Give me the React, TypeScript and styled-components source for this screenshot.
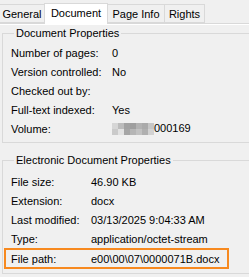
import React from 'react';
import styled, { createGlobalStyle } from 'styled-components';

const GlobalStyle = createGlobalStyle`
  html, body {
    margin: 0;
    padding: 0;
    background: #f0f0f0;
    overflow: hidden;
  }
  body {
    font-family: "Liberation Sans", Arial, sans-serif;
    font-size: 11px;
    color: #000;
  }
`;

const Window = styled.div`
  width: 249px;
  height: 277px;
  overflow: hidden;
  background: #f0f0f0;
`;

// ---------------------------------------------
// tabs
// ---------------------------------------------
const TabStrip = styled.div`
  display: flex;
  align-items: flex-end;
  height: 23px;
  border-bottom: 1px solid #d9d9d9;
  width: 300px;
`;

const Tab = styled.div<{ $width: number; $active?: boolean }>`
  box-sizing: border-box;
  width: ${({ $width }) => $width}px;
  height: ${({ $active }) => ($active ? 21 : 19)}px;
  margin-bottom: ${({ $active }) => ($active ? -1 : 0)}px;
  margin-right: -1px;
  display: flex;
  align-items: center;
  justify-content: center;
  padding-bottom: ${({ $active }) => ($active ? 2 : 0)}px;
  border: 1px solid #d9d9d9;
  border-bottom: ${({ $active }) => ($active ? 'none' : '1px solid #d9d9d9')};
  background: ${({ $active }) => ($active ? '#ffffff' : '#f0f0f0')};
  position: relative;
  z-index: ${({ $active }) => ($active ? 1 : 0)};

  &:first-child {
    border-left: none;
  }
`;

const Page = styled.div`
  border-top: 1px solid #ffffff;
  padding: 2px 0 0 2px;
`;

// ---------------------------------------------
// groups
// ---------------------------------------------
const Group = styled.fieldset<{ $top: number; $pad: number }>`
  box-sizing: border-box;
  width: 270px;
  margin: ${({ $top }) => $top}px 0 0 0;
  padding: ${({ $pad }) => $pad}px 0 4px 8px;
  border: 1px solid #d9d9d9;
  border-right: none;

  legend {
    padding: 0 2px;
    margin-left: 3px;
    line-height: 13px;
  }
`;

const Row = styled.div<{ $labelWidth: number; $highlight?: boolean }>`
  display: grid;
  grid-template-columns: ${({ $labelWidth }) => $labelWidth}px auto;
  align-items: center;
  height: 19px;
  white-space: nowrap;

  ${({ $highlight }) =>
    $highlight &&
    `
    box-sizing: border-box;
    width: 225px;
    height: 21px;
    margin: 0 0 0 -7px;
    padding-left: 5px;
    grid-template-columns: 80px auto;
    border: 2px solid #f7891f;
  `}
`;

const Mosaic = styled.span`
  display: inline-grid;
  grid-template-columns: repeat(7, 6px);
  grid-auto-rows: 6px;
  vertical-align: middle;
  margin-top: -1px;
`;

const Pixel = styled.span<{ $c: string }>`
  background: ${({ $c }) => $c};
`;

const mosaicColors = [
  '#d6d6d6', '#bcbcbc', '#a2a2a2', '#9e9e9e', '#b2b2b2', '#aaaaaa', '#c6c6c6',
  '#cacaca', '#e2e2e2', '#a6a6a6', '#b6b6b6', '#c2c2c2', '#b0b0b0', '#d2d2d2',
];

const docProps: [string, React.ReactNode][] = [
  ['Number of pages:', '0'],
  ['Version controlled:', 'No'],
  ['Checked out by:', ''],
  ['Full-text indexed:', 'Yes'],
  [
    'Volume:',
    <span>
      <Mosaic>
        {mosaicColors.map((c, i) => (
          <Pixel key={i} $c={c} />
        ))}
      </Mosaic>
      000169
    </span>,
  ],
];

const fileProps: [string, string][] = [
  ['File size:', '46.90 KB'],
  ['Extension:', 'docx'],
  ['Last modified:', '03/13/2025 9:04:33 AM'],
  ['Type:', 'application/octet-stream'],
];

export default function App() {
  return (
    <Window>
      <GlobalStyle />
      <TabStrip>
        <Tab $width={45}>General</Tab>
        <Tab $width={64} $active>
          Document
        </Tab>
        <Tab $width={58}>Page Info</Tab>
        <Tab $width={41}>Rights</Tab>
      </TabStrip>
      <Page>
        <Group $top={0} $pad={3}>
          <legend>Document Properties</legend>
          {docProps.map(([label, value]) => (
            <Row key={label} $labelWidth={101}>
              <span>{label}</span>
              <span>{value}</span>
            </Row>
          ))}
        </Group>
        <Group $top={11} $pad={5}>
          <legend>Electronic Document Properties</legend>
          {fileProps.map(([label, value]) => (
            <Row key={label} $labelWidth={80}>
              <span>{label}</span>
              <span>{value}</span>
            </Row>
          ))}
          <Row $labelWidth={80} $highlight>
            <span>File path:</span>
            <span>e00\00\07\0000071B.docx</span>
          </Row>
        </Group>
      </Page>
    </Window>
  );
}
